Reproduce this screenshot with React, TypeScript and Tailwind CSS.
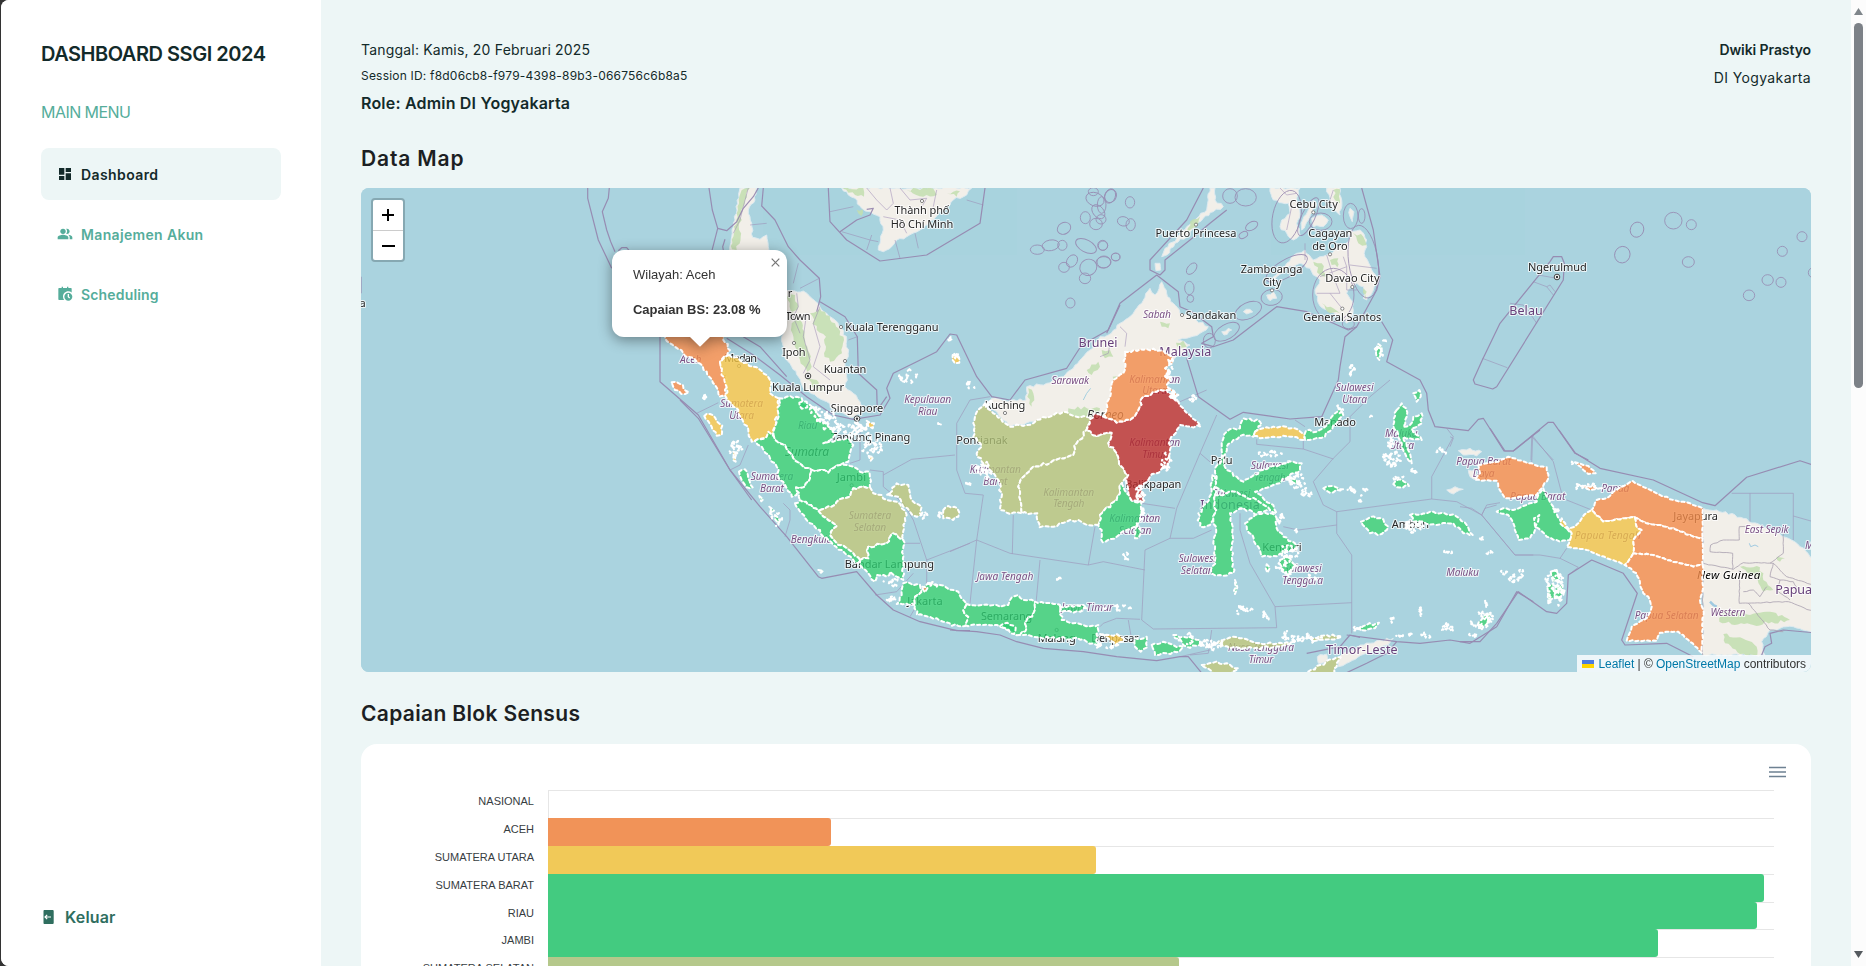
import React from "react";
import { MdDashboard, MdPeopleAlt } from "react-icons/md";
import { RiCalendarScheduleFill } from "react-icons/ri";

/* ------------------------------------------------------------------ */
/* Geometry helpers. Shapes are digitised per sheet at 3 units per px. */
/* ------------------------------------------------------------------ */

type Pt = [number, number];
type Sheet = "A" | "D" | "E" | "F" | "G" | "H" | "I" | "J";

const SHEETS: Record<Sheet, Pt> = {
  A: [360, 180],
  D: [720, 180],
  E: [1100, 180],
  F: [1450, 180],
  G: [620, 400],
  H: [950, 330],
  I: [1180, 380],
  J: [1460, 430],
};

function toPoints(sheet: Sheet, src: string): Pt[] {
  const [ox, oy] = SHEETS[sheet];
  return src
    .trim()
    .split(/\s+/)
    .map((p) => {
      const [x, y] = p.split(",").map(Number);
      return [ox + x / 3, oy + y / 3] as Pt;
    });
}

function noise(x: number, y: number): number {
  const s = Math.sin(x * 12.9898 + y * 78.233) * 43758.5453;
  return (s - Math.floor(s)) * 2 - 1;
}

/* Subdivides every edge and nudges the new points; symmetric per edge so that neighbours share a border. */
function rough(pts: Pt[], amp: number, closed = true): string {
  const out: Pt[] = [];
  const n = pts.length;
  for (let i = 0; i < (closed ? n : n - 1); i++) {
    const a = pts[i];
    const b = pts[(i + 1) % n];
    out.push(a);
    const len = Math.hypot(b[0] - a[0], b[1] - a[1]);
    const steps = Math.floor(len / 3);
    const flip = a[0] < b[0] || (a[0] === b[0] && a[1] < b[1]) ? 1 : -1;
    for (let k = 1; k < steps; k++) {
      const t = k / steps;
      const x = a[0] + (b[0] - a[0]) * t;
      const y = a[1] + (b[1] - a[1]) * t;
      const d = noise(Math.round(x * 4), Math.round(y * 4)) * amp * flip;
      out.push([x - ((b[1] - a[1]) / len) * d, y + ((b[0] - a[0]) / len) * d]);
    }
  }
  if (!closed) out.push(pts[n - 1]);
  return "M" + out.map((p) => `${p[0].toFixed(1)} ${p[1].toFixed(1)}`).join("L") + (closed ? "Z" : "");
}

function line(sheet: Sheet, src: string): string {
  return "M" + toPoints(sheet, src).map((p) => `${p[0].toFixed(1)} ${p[1].toFixed(1)}`).join("L");
}

const GREEN = "#2ecc71";
const ORANGE = "#f18a49";
const YELLOW = "#efc246";
const RED = "#b72a2a";
const OLIVE = "#b0c178";

const LAND: [Sheet, string][] = [
  ["D", "60,24 110,24 105,60 85,90 95,130 98,172 120,178 140,165 145,200 150,240 100,240 60,240 30,215 35,170 45,120 48,80"],
  ["D", "195,335 250,333 270,350 300,380 320,400 345,420 365,445 380,480 385,530 375,560 380,590 375,620 400,640 420,665 430,690 400,712 370,700 340,690 320,665 290,650 250,625 235,590 215,560 195,535 190,500 185,470 200,440 190,400"],
  ["D", "365,24 755,24 740,45 700,60 690,75 660,95 640,120 600,150 560,170 530,180 515,200 490,215 475,210 480,190 490,150 480,110 450,95 425,85 405,55 385,45"],
  ["E", "-340,665 -325,655 -285,662 -222,660 -220,620 -160,610 -110,590 -80,565 -55,535 -30,510 0,470 25,465 60,430 100,400 125,370 150,325 165,345 185,305 200,340 220,370 240,400 270,410 325,440 300,460 260,475 235,480 270,495 215,545 100,700 -60,720 -200,725 -270,740"],
  ["E", "330,24 345,24 345,60 370,80 340,95 310,115 280,145 260,170 225,190 200,225 185,230 195,205 230,175 260,140 290,115 320,90 325,60"],
  ["E", "165,250 180,250 182,270 168,272"],
  ["E", "510,24 600,24 590,60 600,100 590,130 600,165 580,180 560,160 540,140 545,120 570,100 565,70 520,60"],
  ["E", "640,60 650,70 625,120 605,150 608,120"],
  ["E", "635,115 665,105 685,120 670,140 640,140"],
  ["E", "680,24 720,24 725,60 720,105 695,75"],
  ["E", "750,85 762,95 757,125 750,110"],
  ["E", "615,210 640,240 680,225 720,200 745,185 750,150 780,150 800,180 795,230 815,270 835,300 820,330 800,360 790,355 790,320 770,310 750,325 740,340 760,370 755,410 740,430 710,405 680,390 655,370 645,330 660,300 640,285 630,265 600,250 560,265 530,290 515,310 520,290 560,250 590,220"],
  ["E", "500,345 520,335 530,355 510,362"],
  ["E", "430,395 450,388 458,396 440,402"],
  ["E", "365,455 385,445 395,450 372,465"],
  ["J", "728,235 770,240 850,265 930,300 985,325 1020,350 1060,385 1060,605 1000,590 960,595 930,600 905,635 915,675 728,675"],
  ["I", "835,212 870,205 905,215 890,228 850,225"],
  ["I", "800,330 825,320 850,328 820,342"],
  ["I", "865,270 885,270 892,300 870,290"],
  ["I", "478,830 540,795 600,780 640,775 620,795 560,820 500,850 475,860"],
  ["I", "412,830 440,822 444,845 415,850"],
];

const FOREST: [Sheet, string][] = [
  ["D", "65,30 90,24 75,60 60,110 62,170 50,210 36,208 42,160 50,100"],
  ["D", "270,400 300,385 345,430 372,480 366,520 330,545 312,520 318,470 290,450"],
  ["D", "215,430 240,420 262,500 275,560 262,575 240,540 225,500"],
  ["D", "255,590 290,600 310,630 290,632"],
  ["D", "200,350 225,345 235,380 215,400"],
  ["D", "368,26 430,24 432,50 405,45"],
  ["D", "560,30 640,26 650,45 610,50"],
  ["D", "410,90 428,88 424,108"],
  ["D", "680,40 720,34 710,50"],
  ["E", "180,425 210,430 205,445 185,440"],
  ["E", "228,488 250,482 260,500 238,505"],
  ["E", "-40,570 -5,545 0,560 -25,585"],
  ["E", "5,510 30,510 40,530 15,535"],
  ["E", "38,590 66,600 60,620 40,610"],
  ["E", "-215,625 -200,640 -205,680 -218,650"],
  ["E", "-95,685 0,685 0,715 -90,720"],
  ["E", "270,125 300,110 290,140 262,155"],
  ["E", "700,30 720,28 720,70 705,60"],
  ["E", "755,155 790,170 800,195 775,190"],
  ["E", "640,245 665,250 680,290 660,285"],
  ["E", "690,240 715,235 712,262 695,255"],
  ["E", "665,370 700,385 720,400 690,400"],
  ["E", "790,325 800,335 796,360"],
  ["J", "840,410 900,412 910,450 940,480 910,485 880,435"],
  ["J", "795,540 870,555 930,545 990,570 880,585 778,575"],
  ["J", "790,612 840,622 890,650 892,675 840,672 795,640"],
  ["J", "950,380 975,385 960,395"],
];

const PROVINCES: [string, Sheet, string][] = [
  [ORANGE, "A", "900,430 1085,430 1090,480 1110,510 1080,545 1090,580 1100,600 1097,650 1078,650 1065,615 1040,575 1010,545 970,520 945,500 915,475"],
  [ORANGE, "A", "935,607 960,612 987,637 975,642 945,630"],
  [YELLOW, "D", "28,525 60,540 100,560 140,585 155,610 150,640 175,655 180,690 170,710 165,740 155,770 130,775 95,785 85,750 65,715 55,690 40,680 20,655 15,610 5,575 0,548 15,530"],
  [YELLOW, "A", "1033,708 1050,702 1087,737 1085,765 1070,767 1055,740"],
  [YELLOW, "A", "1120,815 1130,820 1127,845 1119,840"],
  [GREEN, "G", "478,-5 500,-10 530,-10 545,-5 550,10 570,15 585,30 600,50 600,65 625,80 645,105 610,130 650,120 680,115 700,135 690,160 685,185 660,195 625,218 600,210 575,210 545,195 520,175 505,155 495,135 465,120 460,95 465,80 475,40"],
  [GREEN, "G", "538,8 560,5 562,22 545,26"],
  [GREEN, "G", "405,122 440,110 445,95 465,120 495,135 505,155 520,175 545,195 575,210 570,235 555,260 528,262 530,285 515,290 500,265 480,240 470,200 450,175 425,140"],
  [GREEN, "G", "575,210 600,210 625,218 660,195 700,200 720,215 748,215 750,262 700,265 690,290 650,305 635,320 595,332 540,300 528,262 555,260 570,235"],
  [OLIVE, "G", "700,265 750,262 760,280 785,285 800,300 830,305 845,325 860,345 850,375 850,420 820,400 800,430 745,440 745,475 720,480 700,460 680,445 655,435 630,405 650,378 610,350 595,332 635,320 650,305 690,290"],
  [GREEN, "G", "525,310 540,300 595,332 610,350 650,378 630,405 655,435 680,445 700,460 720,480 715,490 700,480 680,465 640,435 610,410 600,390 570,370 545,340"],
  [GREEN, "G", "720,480 745,475 745,440 800,430 820,400 850,420 850,540 830,530 810,515 800,530 770,525 765,545 745,520 720,495"],
  [OLIVE, "G", "810,280 830,250 865,255 870,280 885,310 905,320 905,345 890,350 870,335 850,320 835,290 800,285"],
  [OLIVE, "G", "970,330 985,318 1012,325 1015,350 1000,360 970,355"],
  [GREEN, "G", "357,215 375,208 385,235 398,262 380,262 365,240"],
  [GREEN, "G", "418,288 430,298 424,304"],
  [GREEN, "G", "448,320 462,332 450,338"],
  [GREEN, "G", "465,345 480,362 474,368"],
  [GREEN, "G", "595,510 610,512 603,518"],
  [GREEN, "G", "850,550 900,555 905,575 885,590 885,615 830,612 845,585"],
  [GREEN, "G", "925,550 960,555 1000,570 1015,575 1040,612 1030,630 1045,650 1035,678 1015,678 970,665 950,655 890,645 885,615 885,590 905,575"],
  [ORANGE, "G", "907,560 923,563 915,577"],
  [GREEN, "H", "50,822 100,825 150,830 175,825 180,810 205,795 220,810 255,815 250,850 225,880 230,895 210,915 190,910 150,890 100,885 45,885 55,860 40,840"],
  [GREEN, "H", "150,888 172,878 197,893 192,912"],
  [GREEN, "H", "255,815 330,825 335,870 370,880 400,885 445,885 440,940 450,950 410,935 370,925 300,925 250,920 210,915 230,895 225,880 250,850"],
  [GREEN, "H", "330,830 400,825 412,835 370,848 335,845"],
  [YELLOW, "H", "450,912 480,915 500,912 522,925 497,947 475,925"],
  [GREEN, "H", "555,925 590,920 592,952 572,965 555,950"],
  [GREEN, "H", "605,945 640,935 670,945 700,950 690,962 650,970 615,975"],
  [GREEN, "H", "670,915 700,920 750,930 757,948 710,950 695,935"],
  [OLIVE, "I", "110,790 160,770 200,778 240,790 300,788 340,785 300,800 220,805 150,805"],
  [OLIVE, "I", "390,772 440,765 485,770 450,778 400,784"],
  [OLIVE, "I", "65,855 100,848 140,850 175,865 150,885 100,880"],
  [OLIVE, "I", "385,875 420,855 460,838 482,832 470,860 450,890 390,890"],
  [OLIVE, "H", "105,220 130,250 180,290 230,285 260,270 300,260 340,245 380,260 430,265 410,300 380,340 370,375 330,385 300,400 250,410 210,455 205,470 215,550 180,552 150,540 155,500 145,450 120,420 95,395 80,370 95,350 70,320 75,260 90,235"],
  [OLIVE, "H", "410,300 440,318 485,308 475,340 500,370 515,410 535,435 515,460 500,510 450,555 445,585 400,580 385,570 350,575 310,590 268,592 262,550 215,550 205,470 210,455 250,410 300,400 330,385 370,375 380,340"],
  [GREEN, "H", "515,460 530,490 550,515 575,515 575,550 560,590 530,600 500,620 458,637 455,600 445,585 450,555 500,510"],
  [GREEN, "H", "560,580 572,600 565,625 555,625"],
  [RED, "H", "410,300 430,250 465,262 500,278 540,270 565,240 575,205 620,185 650,180 685,215 700,235 735,270 752,290 720,290 690,285 660,330 660,390 650,410 600,440 575,470 585,515 545,512 535,480 530,460 535,435 515,410 500,370 475,340 485,308 440,318"],
  [ORANGE, "H", "525,65 570,58 640,62 665,80 668,100 645,115 660,140 650,165 685,195 650,180 620,185 575,205 565,240 540,270 500,278 465,262 475,210 490,150 520,130"],
  [GREEN, "I", "225,155 245,135 240,125 190,115 180,145 160,145 140,155 125,190 125,240 105,265 110,290 105,320 140,340 170,335 200,355 230,360 270,390 290,400 280,375 250,355 225,335 250,325 280,315 320,295 360,270 365,250 340,245 300,255 250,270 215,290 190,305 170,290 140,270 132,240 140,200 160,180 180,168 220,170"],
  [YELLOW, "I", "225,155 250,145 300,140 345,145 375,165 370,180 330,170 290,172 240,175 220,168"],
  [GREEN, "I", "375,180 378,152 410,155 430,145 455,110 480,85 490,105 460,135 435,170 400,178"],
  [GREEN, "I", "105,290 95,285 95,330 80,370 55,400 60,440 90,435 100,420 105,400 105,345"],
  [GREEN, "I", "105,345 140,340 170,335 200,355 230,360 270,390 250,395 225,405 210,390 180,385 150,400 158,440 160,480 155,530 160,580 120,585 95,580 105,540 100,490 108,440 100,420 105,400"],
  [GREEN, "I", "195,430 225,405 275,400 290,415 290,445 310,470 345,490 350,505 310,520 270,530 245,530 235,500 200,440"],
  [GREEN, "I", "300,540 320,525 345,555 325,588 308,575"],
  [GREEN, "I", "260,553 270,563 262,578"],
  [GREEN, "I", "165,600 172,622 165,642"],
  [GREEN, "I", "430,325 455,318 490,328 450,338"],
  [GREEN, "I", "335,295 350,300 352,312 338,308"],
  [GREEN, "I", "650,90 665,70 678,85 680,110 670,140 690,135 700,110 725,100 725,130 695,145 710,165 725,180 690,175 670,170 690,220 695,250 685,240 665,200 655,165 640,135"],
  [GREEN, "I", "700,40 718,30 722,50 710,65"],
  [GREEN, "I", "640,312 655,298 687,318 650,322"],
  [GREEN, "I", "543,425 570,412 610,418 625,440 605,462 570,460"],
  [GREEN, "I", "690,405 740,400 790,398 830,410 860,435 878,465 850,460 820,430 770,435 730,425 700,425"],
  [GREEN, "I", "530,745 560,735 597,728 585,745 545,750"],
  [GREEN, "I", "893,735 910,710 932,698 925,725 905,750"],
  [GREEN, "J", "272,425 290,420 298,450 280,455"],
  [GREEN, "J", "262,470 280,460 285,500 265,520"],
  [GREEN, "J", "288,470 308,465 303,500 285,505"],
  [ORANGE, "J", "55,105 85,100 115,95 145,80 185,92 225,105 260,112 265,145 245,175 230,195 190,200 160,205 135,205 115,170 110,152 45,150 60,130"],
  [GREEN, "J", "250,175 260,200 280,230 300,270 320,295 335,310 330,330 300,335 260,320 235,295 225,290 222,265 238,255 225,300 210,325 175,330 160,280 145,255 110,245 130,235 160,240 200,225 230,215 235,195"],
  [ORANGE, "J", "410,210 440,205 460,185 518,153 560,175 590,190 640,210 690,220 728,235 728,325 700,320 650,300 600,285 560,280 525,262 490,265 430,275 395,240"],
  [YELLOW, "J", "305,265 300,280 320,295 345,290 380,248 395,240 430,275 490,265 525,262 530,290 545,300 520,330 520,370 495,405 440,385 380,360 320,350 330,330 335,310"],
  [ORANGE, "J", "525,262 560,280 600,285 650,300 700,320 728,325 728,405 700,410 660,400 620,390 580,375 520,370 520,330 545,300 530,290"],
  [ORANGE, "J", "520,370 580,375 620,390 660,400 700,410 728,405 728,480 720,510 730,540 725,668 690,635 655,605 600,608 590,632 500,632 515,590 560,565 575,530 565,500 550,490 530,430 495,405"],
  [ORANGE, "J", "345,97 370,105 385,108 407,130 385,132 370,120"],
  [ORANGE, "J", "350,162 390,170 430,175 390,180"],
  [GREEN, "E", "835,492 845,500 838,540 830,530"],
  [YELLOW, "D", "698,525 715,528 718,548 705,550"],
  [YELLOW, "D", "440,722 462,730 458,745 445,738"],
  [YELLOW, "D", "446,828 460,832 452,842"],
];

/* Clusters of islets: sheet, centre, radii, count. */
const ISLETS: [Sheet, number, number, number, number, number][] = [
  ["D", 320, 715, 35, 22, 20], ["D", 345, 740, 35, 15, 14], ["D", 420, 750, 45, 25, 36], ["D", 455, 800, 30, 28, 20],
  ["D", 285, 690, 25, 15, 8], ["D", 565, 590, 30, 18, 12], ["D", 755, 615, 15, 16, 5], ["D", 693, 482, 4, 4, 2],
  ["D", 710, 530, 12, 12, 6], ["D", 660, 735, 6, 3, 2], ["D", 45, 805, 20, 18, 8],
  ["A", 1040, 655, 12, 8, 6], ["A", 1128, 800, 20, 22, 8], ["G", 470, 355, 20, 25, 7], ["G", 910, 345, 22, 12, 6],
  ["G", 960, 343, 8, 10, 4], ["G", 815, 545, 25, 14, 8], ["G", 813, 602, 16, 8, 7], ["G", 930, 552, 25, 4, 5],
  ["H", 105, 420, 25, 25, 20], ["H", 62, 465, 12, 8, 4], ["H", 650, 395, 15, 22, 14], ["H", 570, 490, 14, 25, 18],
  ["H", 655, 120, 12, 35, 16], ["H", 672, 205, 14, 8, 9], ["H", 728, 200, 6, 10, 4], ["H", 575, 550, 6, 20, 6],
  ["H", 530, 680, 10, 15, 4], ["H", 322, 748, 6, 4, 3], ["H", 500, 832, 45, 10, 8], ["H", 880, 845, 22, 14, 6],
  ["H", 945, 860, 8, 10, 3], ["H", 765, 942, 15, 14, 8], ["H", 710, 930, 25, 18, 8], ["H", 487, 950, 30, 8, 6],
  ["H", 805, 945, 22, 12, 10], ["H", 445, 945, 8, 8, 4], ["H", 115, 225, 12, 10, 5],
  ["I", 275, 225, 40, 10, 12], ["I", 350, 300, 30, 25, 20], ["I", 380, 340, 18, 12, 9], ["I", 300, 410, 8, 25, 9],
  ["I", 325, 515, 30, 22, 16], ["I", 320, 560, 28, 30, 18], ["I", 345, 448, 5, 4, 2], ["I", 395, 590, 25, 15, 5],
  ["I", 185, 690, 20, 12, 6], ["I", 255, 708, 5, 12, 4], ["I", 530, 330, 40, 5, 12], ["I", 542, 355, 5, 14, 4],
  ["I", 640, 235, 28, 22, 26], ["I", 632, 195, 12, 20, 9], ["I", 700, 265, 8, 18, 5], ["I", 655, 290, 18, 8, 4],
  ["I", 785, 210, 15, 8, 5], ["I", 700, 440, 30, 18, 22], ["I", 905, 480, 8, 6, 3], ["I", 805, 515, 12, 4, 4],
  ["I", 930, 515, 5, 10, 3], ["I", 1000, 600, 15, 12, 8], ["I", 1025, 580, 6, 20, 5], ["I", 965, 580, 14, 8, 3],
  ["I", 905, 720, 35, 25, 22], ["I", 920, 670, 6, 14, 4], ["I", 880, 765, 12, 5, 4], ["I", 800, 742, 20, 12, 9],
  ["I", 720, 695, 8, 14, 5], ["I", 640, 720, 10, 8, 5], ["I", 665, 765, 28, 5, 6], ["I", 738, 765, 14, 4, 4],
  ["I", 370, 775, 55, 10, 24], ["I", 320, 765, 10, 12, 6], ["I", 100, 795, 12, 12, 8], ["I", 535, 745, 10, 8, 4],
  ["J", 285, 475, 28, 55, 46], ["E", 752, 562, 12, 22, 8], ["E", 835, 520, 10, 25, 8], ["E", 855, 482, 8, 2, 2],
  ["E", 720, 690, 12, 10, 4], ["J", 290, 240, 12, 18, 5], ["J", 375, 170, 28, 8, 7], ["J", 340, 100, 6, 5, 2],
  ["E", 280, 655, 6, 8, 3], ["E", 808, 712, 4, 2, 1],
];

const MARITIME: [Sheet, string][] = [
  ["A", "683,24 683,55 715,180 755,265"],
  ["A", "748,24 745,55 727,95 740,150 752,185 765,215"],
  ["A", "775,212 785,203 800,203 810,215"],
  ["A", "1047,24 1057,90 1073,145 1055,215"],
  ["A", "1073,145 1100,152 1130,125 1150,85 1180,50 1195,24"],
  ["A", "1095,178 1088,200 1090,210"],
  ["A", "3,290 3,340"],
  ["A", "900,470 900,605 1015,705 1110,870 1175,960"],
  ["G", "180,0 235,55 330,210 420,320 500,410 595,530 605,535 710,515 770,585 820,630 900,665 1010,692 1050,692"],
  ["H", "0,900 80,905 150,915 200,935 280,955 400,965 500,980 620,992 690,980 715,980 760,1035"],
  ["D", "130,24 125,78 165,120 205,200 240,240 298,295 302,350 290,395"],
  ["D", "300,365 375,410 412,470 415,580 470,630 472,690 500,650"],
  ["D", "20,475 100,525 180,585 260,650 340,705 400,718 480,705 510,655 500,625 520,580 590,545 650,515 690,462 710,465 770,590 815,650 870,660 915,600 1040,565 1085,495 1165,450 1200,375"],
  ["D", "70,470 120,500 200,590"],
  ["D", "325,24 330,125 380,180 480,243 620,225 780,130 795,24"],
  ["D", "360,155 410,120 450,105 460,85 440,88"],
  ["E", "20,460 60,370 170,285 235,335 240,380 275,395 335,440 340,470 305,490 340,500 400,480 530,380 620,395 700,430 745,450 770,440 830,330 840,290 820,150 785,24"],
  ["E", "310,24 260,120 150,240 150,270 180,285 195,270 195,240 270,180 330,130 380,90"],
  ["E", "845,425 878,480 860,545 960,600 980,640 985,690 1005,740 1105,752 1135,718 1150,715 1212,813 1240,813 1345,727 1360,727 1425,820 1465,840"],
  ["E", "260,535 295,650 390,718 430,697 570,717 665,710 715,600 720,560 735,470 770,440"],
  ["J", "90,-5 135,63 160,63 240,0"],
  ["J", "297,0 345,68 420,115 580,150 728,218 765,227 860,142 1020,92 1060,105"],
  ["I", "500,765 650,785 720,790 810,780 870,790 950,740 1010,635 1060,665"],
  ["J", "0,635 60,635 110,580 175,485 260,545 290,550 320,520 325,435 395,390 490,430 532,490 485,630 495,645 620,640 700,680"],
  ["I", "380,820 480,800 510,765 540,772"],
  ["I", "485,885 560,850 620,820 650,785"],
  ["F", "300,245 310,230 335,230 343,250 340,300 140,620 128,627 75,612 70,600 97,540 150,430 300,245"],
  ["J", "905,675 915,650 935,640 930,610 970,600 1060,608"],
];

const THIN: [Sheet, string][] = [
  ["A", "1010,700 1075,668"], ["A", "1110,870 1140,855 1165,795"],
  ["D", "365,155 450,180 475,185"], ["D", "330,95 400,80"], ["D", "455,165 440,210"], ["D", "525,180 540,235"], ["D", "585,160 595,205"], ["D", "740,60 790,75"],
  ["D", "235,250 220,310"], ["D", "240,325 298,295"], ["D", "412,470 385,480"], ["D", "140,130 90,135"],
  ["D", "440,24 470,60 500,90 520,70 510,24"], ["D", "540,24 570,60 620,55 600,90"], ["D", "490,110 540,120 560,160"], ["D", "650,30 640,80"],
  ["D", "85,24 70,80 60,120 40,160"], ["D", "230,340 235,380 220,410 240,460"], ["D", "260,400 250,470 270,540 250,580"], ["D", "300,380 280,430 300,500 280,560 330,600"],
  ["G", "495,410 510,360 510,330 490,310"], ["G", "690,190 720,180 720,80"], ["G", "750,210 790,215 790,260 850,310 880,360 920,480 920,550"], ["G", "790,225 875,178 1005,165"],
  ["G", "850,430 900,430"], ["G", "765,585 830,575 880,520"], ["G", "870,650 885,625"], ["G", "1050,430 920,480"],
  ["H", "120,200 60,210 20,280 20,420 45,490 100,495 80,630 60,820"], ["H", "0,665 80,630 180,670 415,705 460,695 585,720"],
  ["H", "190,555 187,672"], ["H", "270,690 258,820"], ["H", "435,590 415,705"], ["H", "575,520 675,535"],
  ["H", "575,870 585,660 660,625 680,535 750,370 800,255"], ["H", "575,870 610,897 980,893 975,830 900,700 870,600 870,550"],
  ["H", "450,890 460,880 500,865 570,868"], ["H", "535,870 545,930"], ["H", "785,900 775,970 720,975"], ["H", "750,370 785,400"], ["H", "660,625 730,625 785,600"],
  ["H", "690,215 770,180"],
  ["I", "510,110 510,185 460,235 400,305 430,375 470,395 470,460 515,525 515,760"], ["I", "470,435 355,450 310,440"], ["I", "515,668 285,680"],
  ["I", "470,395 755,357 830,365 905,405 1005,525 1060,525"], ["I", "755,357 755,290 820,170 800,145"], ["I", "230,178 230,193 370,207 460,237"], ["I", "370,180 370,207"], ["I", "375,140 345,120"],
  ["I", "510,110 570,50 630,0"], ["I", "0,830 90,810"], ["I", "905,405 920,375 960,368"],
  ["J", "0,230 35,235 65,255 165,375 240,375 300,385 355,412"], ["J", "65,255 75,235 110,225"], ["J", "218,18 215,100"], ["J", "218,18 280,95 305,190"], ["J", "300,385 320,355"], ["J", "320,210 395,240"],
  ["J", "355,412 325,435"],
  ["J", "815,190 1000,190 1000,330"], ["J", "870,190 870,275"], ["J", "1000,258 1060,275"],
  ["F", "245,770 243,840"], ["F", "245,770 310,840"], ["F", "0,770 10,775 0,800"],
  ["F", "97,535 172,563"], ["F", "250,305 290,320 310,345"], ["F", "180,370 220,375 240,400 260,430"], ["F", "265,285 320,295"], ["F", "290,320 300,315 315,335"],
  ["E", "575,80 560,150"], ["E", "615,190 615,240"], ["E", "660,290 740,260 730,230"], ["E", "740,260 740,330 770,330"], ["E", "680,225 700,290 720,340 650,340"], ["E", "750,255 830,265"], ["E", "690,340 730,390"],
  ["E", "540,24 560,45 590,40"], ["E", "75,500 80,460 60,440"], ["E", "0,530 25,520 30,490"],
  ["E", "700,30 690,60"],
];

const BORDERS: [Sheet, string][] = [
  ["J", "728,235 728,675"],
  ["J", "728,400 820,418 850,398 940,400 980,440 1060,465"], ["J", "750,365 818,370 818,418"], ["J", "750,365 752,345 790,330 838,330 838,290 860,290"],
  ["J", "970,310 970,370 930,400"], ["J", "838,420 838,520 985,515 1060,545"], ["J", "865,520 930,600 970,605"], ["J", "850,485 880,480 900,500 920,470"],
  ["J", "940,400 930,440 960,450 950,480 990,510"], ["J", "960,450 1000,455 1020,490 1050,490"],
];

/* Maritime zones drawn as looping contours around reefs and small islands. */
const ZONES: [Sheet, number, number, number, number, number][] = [
  ["F", 561, 149, 20, 23, 20], ["F", 670, 122, 26, 25, 0], ["F", 724, 134, 15, 15, 0], ["F", 517, 224, 23, 25, 20], ["F", 715, 246, 18, 16, 0],
  ["F", 1056, 170, 15, 15, 0], ["F", 997, 214, 15, 15, 0], ["F", 953, 300, 17, 16, 0], ["F", 993, 307, 15, 15, 0], ["F", 897, 346, 17, 16, 0], ["F", 1090, 278, 15, 15, 0],
  ["D", 1032, 145, 21, 17, -30], ["D", 952, 209, 21, 14, 0], ["D", 992, 196, 26, 16, -10], ["D", 1027, 196, 14, 15, 0], ["D", 1098, 198, 34, 18, 28],
  ["D", 1149, 197, 14, 14, 0], ["D", 1056, 243, 20, 15, -55], ["D", 1032, 262, 16, 15, 0], ["D", 1105, 262, 26, 24, -30], ["D", 1150, 247, 22, 17, -5],
  ["D", 1095, 295, 17, 16, 0], ["D", 1187, 231, 13, 12, 0], ["D", 1051, 369, 14, 15, 0], ["D", 1096, 113, 15, 18, 0], ["D", 1125, 58, 28, 20, 20],
  ["D", 1172, 48, 17, 20, 30], ["D", 1135, 95, 24, 16, 50], ["D", 1128, 132, 19, 17, 0], ["D", 1120, 35, 15, 12, 0], ["D", 1143, 118, 15, 14, 0],
  ["E", 30, 48, 16, 22, 20], ["E", 90, 67, 14, 17, 0], ["E", 70, 124, 18, 14, 10], ["E", 92, 134, 14, 18, 0], ["E", 8, 196, 15, 15, 0], ["E", 12, 246, 21, 18, 0],
  ["E", 47, 231, 13, 11, 0], ["E", 5, 75, 13, 25, 0], ["E", 275, 266, 12, 20, 40], ["E", 268, 324, 14, 20, 0], ["E", 271, 356, 10, 11, 0], ["E", 455, 138, 20, 12, -30], ["E", 430, 165, 14, 9, -30],
  ["E", 390, 48, 22, 22, 0], ["E", 437, 52, 32, 26, 0],
  ["E", 515, 352, 32, 24, -10], ["E", 445, 392, 42, 24, -25], ["E", 380, 455, 42, 22, -30], ["E", 328, 482, 18, 22, 0],
  ["E", 560, 110, 42, 80, 12], ["E", 625, 110, 20, 62, 25], ["E", 662, 125, 34, 26, 0], ["E", 752, 108, 22, 38, 0], ["E", 785, 108, 10, 22, 0], ["E", 700, 345, 62, 80, 0],
  ["E", 790, 245, 44, 110, -8], ["E", 745, 432, 18, 14, 0], ["E", 560, 265, 70, 26, -30],
];

type Kind = "city" | "state" | "country" | "island" | "bigisland";

const LABELS: [Kind, Sheet, string, number, number, number][] = [
  ["city", "A", "a", 8, 381, 0],
  ["city", "D", "Thành phố", 606, 103, 165], ["city", "D", "Hồ Chí Minh", 606, 144, 188],
  ["city", "D", "r", 210, 350, 0], ["city", "D", "Town", 234, 420, 76],
  ["city", "D", "Kuala Terengganu", 516, 452, 280], ["city", "D", "Ipoh", 222, 527, 70], ["city", "D", "Kuantan", 375, 579, 128],
  ["city", "D", "Kuala Lumpur", 264, 632, 216], ["city", "D", "Singapore", 411, 697, 157], ["city", "D", "Medan", 62, 546, 98],
  ["city", "D", "Tanjung Pinang", 452, 784, 238], ["city", "D", "Kuching", 855, 686, 122], ["city", "D", "Pontianak", 786, 792, 154],
  ["city", "E", "Cebu City", 641, 84, 145], ["city", "E", "Puerto Princesa", 288, 170, 243], ["city", "E", "Cagayan", 691, 170, 132],
  ["city", "E", "de Oro", 690, 210, 106], ["city", "E", "Zamboanga", 515, 278, 185], ["city", "E", "City", 516, 319, 56],
  ["city", "E", "Davao City", 757, 307, 163], ["city", "E", "General Santos", 727, 422, 234], ["city", "E", "Sandakan", 333, 416, 152],
  ["city", "F", "Ngerulmud", 322, 272, 176], ["country", "F", "Belau", 228, 406, 100],
  ["country", "D", "Brunei", 1134, 500, 117], ["country", "E", "Malaysia", 256, 527, 156],
  ["state", "E", "Sabah", 171, 415, 83], ["state", "D", "Sarawak", 1051, 611, 113], ["state", "D", "Kepulauan", 623, 670, 141], ["state", "D", "Riau", 623, 705, 58],
  ["state", "A", "Aceh", 992, 549, 64], ["state", "D", "Sumatera", 65, 680, 128], ["state", "D", "Utara", 65, 716, 74],
  ["state", "D", "Riau", 263, 746, 58], ["island", "G", "Sumatra", 561, 167, 133],
  ["state", "G", "Sumatera", 456, 239, 128], ["state", "G", "Barat", 456, 275, 72], ["city", "G", "Jambi", 694, 243, 88],
  ["state", "G", "Sumatera", 750, 357, 128], ["state", "G", "Selatan", 750, 392, 97], ["state", "G", "Bengkulu", 575, 429, 125],
  ["city", "G", "Bandar Lampung", 808, 503, 268], ["city", "G", "Jakarta", 915, 614, 106],
  ["state", "H", "Kalimantan", 614, 158, 153], ["state", "H", "Utara", 614, 193, 74], ["island", "H", "Borneo", 466, 266, 110],
  ["state", "H", "Kalimantan", 614, 349, 153], ["state", "H", "Timur", 614, 385, 74], ["state", "H", "Kalimantan", 136, 428, 153], ["state", "H", "Barat", 136, 464, 72],
  ["state", "H", "Kalimantan", 356, 497, 153], ["state", "H", "Tengah", 356, 532, 94], ["city", "H", "Balikpapan", 610, 475, 168],
  ["state", "H", "Kalimantan", 554, 576, 153], ["state", "H", "Selatan", 555, 612, 98],
  ["state", "H", "Jawa Tengah", 165, 751, 170], ["city", "H", "Semarang", 170, 869, 154], ["city", "H", "Malang", 320, 937, 114],
  ["state", "H", "Jawa Timur", 412, 842, 155], ["city", "H", "Denpasar", 495, 935, 142],
  ["state", "H", "Sulawesi", 742, 695, 112], ["state", "H", "Selatan", 742, 731, 98],
  ["city", "I", "Palu", 125, 252, 66], ["state", "E", "Sulawesi", 764, 632, 114], ["state", "E", "Utara", 764, 668, 74], ["city", "E", "Manado", 705, 739, 125],
  ["state", "I", "Sulawesi", 270, 268, 114], ["state", "I", "Tengah", 270, 303, 94], ["state", "I", "Sulawesi", 154, 350, 114], ["country", "I", "Indonesia", 150, 386, 178],
  ["city", "I", "Kendari", 306, 513, 118], ["state", "I", "Sulawesi", 368, 575, 114], ["state", "I", "Tenggara", 368, 611, 122],
  ["state", "I", "Maluku", 664, 171, 98], ["state", "I", "Utara", 665, 207, 74], ["state", "I", "Papua Barat", 911, 254, 165], ["state", "I", "Daya", 911, 290, 66],
  ["city", "I", "Ambon", 691, 444, 112], ["state", "I", "Maluku", 848, 588, 98], ["state", "I", "Nusa Tenggara", 243, 813, 198], ["state", "I", "Timur", 243, 849, 74],
  ["country", "I", "Timor-Leste", 546, 822, 214],
  ["state", "J", "Papua Barat", 233, 211, 166], ["state", "J", "Papua", 466, 186, 84], ["state", "J", "Papua Tengah", 443, 326, 198], ["city", "J", "Jayapura", 707, 269, 134],
  ["state", "J", "East Sepik", 920, 309, 132], ["bigisland", "J", "New Guinea", 806, 446, 190], ["country", "J", "Papua", 1001, 491, 110],
  ["state", "J", "Papua Selatan", 620, 566, 192], ["state", "J", "Western", 804, 558, 105], ["state", "J", "M", 1048, 358, 0],
];

const DOTS: [Sheet, number, number, boolean][] = [
  ["D", 606, 63, false], ["D", 363, 441, false], ["D", 222, 489, false], ["D", 375, 543, false], ["D", 264, 588, true], ["D", 411, 716, true], ["D", 855, 699, false],
  ["E", 640, 97, false], ["E", 288, 134, false], ["E", 690, 223, false], ["E", 516, 331, false], ["E", 757, 321, false], ["E", 727, 386, false], ["E", 246, 405, false],
  ["F", 321, 291, true], ["D", 57, 558, false], ["G", 695, 256, false], ["H", 320, 900, false],
];

function labelClass(kind: Kind): string {
  switch (kind) {
    case "city":
      return "fill-[#262626] text-[11px]";
    case "state":
      return "fill-[#7a5084] text-[10.2px] italic";
    case "country":
      return "fill-[#67407a] text-[12.5px]";
    case "island":
      return "fill-[#333333] text-[12px] italic";
    case "bigisland":
      return "fill-[#000000] text-[11.5px] italic";
  }
}

function isletPath([sheet, cx, cy, rx, ry, n]: [Sheet, number, number, number, number, number]): string {
  const [ox, oy] = SHEETS[sheet];
  let d = "";
  for (let i = 0; i < n; i++) {
    const a = noise(cx + i * 7, cy) * Math.PI;
    const r = Math.sqrt(Math.abs(noise(cy + i * 13, cx)));
    const x = ox + (cx + Math.cos(a) * rx * r) / 3;
    const y = oy + (cy + Math.sin(a) * ry * r) / 3;
    const dx = noise(x, i) * 1.8;
    const dy = noise(i, y) * 1.8;
    d += `M${x.toFixed(1)} ${y.toFixed(1)}l${dx.toFixed(1)} ${dy.toFixed(1)}l${(-dy * 0.7).toFixed(1)} ${(dx * 0.7).toFixed(1)}`;
  }
  return d;
}

function MapDrawing() {
  const shapes = PROVINCES.map(([fill, sheet, src]) => {
    const straight = sheet === "J";
    return { fill, d: rough(toPoints(sheet, src), straight ? 0.7 : 1.5) };
  });
  return (
    <svg viewBox="361 188 1450 484" className="block h-full w-full" aria-hidden="true">
      <rect x="361" y="188" width="1450" height="484" fill="#aad3df" />
      <g fill="#f2efe9" stroke="#ddeaf0" strokeWidth="1">
        {LAND.map(([s, p], i) => (
          <path key={i} d={rough(toPoints(s, p), 1.3)} />
        ))}
      </g>
      <g fill="#c3dfb0" opacity="0.85">
        {FOREST.map(([s, p], i) => (
          <path key={i} d={rough(toPoints(s, p), 1.8)} />
        ))}
      </g>
      <g fill="#f2efe9">
        {shapes.map((s, i) => (
          <path key={i} d={s.d} />
        ))}
      </g>
      <g fill="none" stroke="#9585ae" strokeWidth="1.2" strokeLinejoin="round" opacity="0.9">
        {MARITIME.map(([s, p], i) => (
          <path key={i} d={line(s, p)} />
        ))}
      </g>
      <g fill="none" stroke="#9b8ab3" strokeWidth="0.7" opacity="0.75">
        {THIN.map(([s, p], i) => (
          <path key={i} d={line(s, p)} />
        ))}
      </g>
      <g fill="none" stroke="#9585ae" strokeWidth="0.9" opacity="0.85">
        {ZONES.map(([s, cx, cy, rx, ry, rot], i) => {
          const x = SHEETS[s][0] + cx / 3;
          const y = SHEETS[s][1] + cy / 3;
          return <ellipse key={i} cx={x} cy={y} rx={rx / 3} ry={ry / 3} transform={`rotate(${rot} ${x} ${y})`} />;
        })}
      </g>
      <g fill="none" stroke="#a8a0ae" strokeWidth="0.8">
        {BORDERS.map(([s, p], i) => (
          <path key={i} d={rough(toPoints(s, p), 0.4, false)} />
        ))}
      </g>
      <path d={line("J", "868,340 872,350 885,345 895,350")} stroke="#9fc9e0" fill="none" />
      <path d={line("J", "750,515 760,525 770,530")} stroke="#9fc9e0" strokeWidth="2.5" fill="none" />
      <path d={line("D", "1090,660 1100,640 1112,625")} stroke="#a5cfe0" fill="none" />
      <g>
        {DOTS.map(([s, x, y, capital], i) => {
          const cx = SHEETS[s][0] + x / 3;
          const cy = SHEETS[s][1] + y / 3;
          return capital ? (
            <g key={i}>
              <circle cx={cx} cy={cy} r="2.8" fill="#fff" stroke="#333" strokeWidth="0.9" />
              <circle cx={cx} cy={cy} r="1.2" fill="#333" />
            </g>
          ) : (
            <circle key={i} cx={cx} cy={cy} r="1.6" fill="#fff" stroke="#666" strokeWidth="0.8" />
          );
        })}
      </g>
      <g
        textAnchor="middle"
        className="font-['Noto_Sans',sans-serif]"
        stroke="#ffffff"
        strokeOpacity="0.75"
        strokeWidth="2.2"
        strokeLinejoin="round"
        paintOrder="stroke"
      >
        {LABELS.map(([kind, s, text, x, y, w], i) => (
          <text
            key={i}
            x={SHEETS[s][0] + x / 3}
            y={SHEETS[s][1] + y / 3}
            className={labelClass(kind)}
            textLength={w ? w / 3 : undefined}
          >
            {text}
          </text>
        ))}
      </g>
      <g fillOpacity="0.8" stroke="#ffffff" strokeWidth="2" strokeDasharray="3 3" strokeLinecap="round" strokeLinejoin="round">
        {shapes.map((s, i) => (
          <path key={i} d={s.d} fill={s.fill} />
        ))}
      </g>
      <g fill="none" stroke="#ffffff" strokeWidth="2" strokeLinecap="round" strokeLinejoin="round">
        {ISLETS.map((c, i) => (
          <path key={i} d={isletPath(c)} />
        ))}
      </g>
    </svg>
  );
}

function MapPanel() {
  return (
    <div className="relative h-[484px] w-full overflow-hidden rounded-lg bg-[#aad3df] font-['Liberation_Sans',Arial,sans-serif]">
      <MapDrawing />

      <div className="absolute top-[10px] left-[10px] flex flex-col overflow-hidden rounded-[4px] border-2 border-[#86a8b2] bg-white">
        <button className="flex h-[31px] w-[30px] items-center justify-center border-b border-[#cccccc]">
          <svg width="14" height="14" viewBox="0 0 14 14" stroke="#000" strokeWidth="2">
            <path d="M1 7h12M7 1v12" />
          </svg>
        </button>
        <button className="flex h-[29px] w-[30px] items-center justify-center">
          <svg width="14" height="14" viewBox="0 0 14 14" stroke="#000" strokeWidth="2">
            <path d="M1 7h13" />
          </svg>
        </button>
      </div>

      <div className="absolute top-[62px] left-[251px] h-[97px] w-[175px] drop-shadow-[0_3px_7px_rgba(0,0,0,0.4)]">
        <div className="relative h-[87px] rounded-xl bg-white pt-[16px] pl-[21px] text-[13px] leading-[17px] text-[#333333]">
          <p>Wilayah: Aceh</p>
          <p className="mt-[18px] font-bold tracking-[-0.02px]">Capaian BS: 23.08 %</p>
          <svg className="absolute top-[8px] right-[7px]" width="9" height="9" viewBox="0 0 9 9" stroke="#757575" strokeWidth="1.2">
            <path d="M.7.7l7.6 7.6M8.3.7L.7 8.3" />
          </svg>
        </div>
        <svg className="mx-auto block" width="20" height="10" viewBox="0 0 20 10">
          <path d="M0 0h20L10.6 9.2q-.6.6-1.2 0z" fill="#fff" />
        </svg>
      </div>

      <div className="absolute right-0 bottom-0 flex h-[17px] items-center bg-white/80 px-[5px] text-[12px] tracking-[-0.03px] text-[#333333]">
        <svg className="mr-1" width="12" height="8" viewBox="0 0 12 8">
          <path fill="#4C7BE1" d="M0 0h12v4H0z" />
          <path fill="#FFD500" d="M0 4h12v4H0z" />
        </svg>
        <span className="text-[#0078a8]">Leaflet</span>
        <span className="whitespace-pre"> | © </span>
        <span className="text-[#0078a8]">OpenStreetMap</span>
        <span className="whitespace-pre"> contributors</span>
      </div>
    </div>
  );
}

const ROWS: { name: string; width: number; color: string }[] = [
  { name: "NASIONAL", width: 0, color: "bg-white" },
  { name: "ACEH", width: 283, color: "bg-[#f19358]" },
  { name: "SUMATERA UTARA", width: 548, color: "bg-[#f1c958]" },
  { name: "SUMATERA BARAT", width: 1216, color: "bg-[#43cb80]" },
  { name: "RIAU", width: 1209, color: "bg-[#43cb80]" },
  { name: "JAMBI", width: 1110, color: "bg-[#43cb80]" },
  { name: "SUMATERA SELATAN", width: 631, color: "bg-[#b5c88b]" },
];

function ChartCard() {
  return (
    <section className="mt-[15px] h-[260px] shrink-0 rounded-t-[16px] bg-white font-['Liberation_Sans',Arial,sans-serif]">
      <div className="flex h-[46px] items-start justify-end pt-[22px] pr-[25px]">
        <svg width="17" height="12" viewBox="0 0 17 12" stroke="#6e8192" strokeWidth="1.6">
          <path d="M0 1.5h17M0 6h17M0 10.5h17" />
        </svg>
      </div>
      {ROWS.map((row) => (
        <div key={row.name} className="flex h-[27.9px] pr-[37px]">
          <div className="w-[187px] shrink-0 pt-[4px] pr-[14px] text-right text-[11px] leading-[14px] whitespace-nowrap text-[#373d3f]">
            {row.name}
          </div>
          <div className="grow border-t border-l border-[#e6e6e6]">
            <div className={`-mt-px -ml-px h-[27.9px] rounded-r-[3px] ${row.color}`} style={{ width: row.width }} />
          </div>
        </div>
      ))}
    </section>
  );
}

function Sidebar() {
  return (
    <aside className="flex w-[320px] shrink-0 flex-col bg-white px-[40px] pt-[40px] pb-[34px]">
      <h1 className="text-[20px] leading-[28px] font-semibold tracking-[-0.47px] whitespace-nowrap text-[#132a2a]">DASHBOARD SSGI 2024</h1>
      <p className="mt-[32px] text-[16px] leading-[24px] tracking-[-0.55px] text-[#55ad9b]">MAIN MENU</p>
      <nav className="mt-[24px] flex flex-col gap-2 text-[14px] font-semibold text-[#55ad9b]">
        <a className="flex h-[52px] items-center gap-2 rounded-lg bg-[#edf6f6] px-4 text-[#132a2a]">
          <MdDashboard size={16} />
          <span className="tracking-[0.4px]">Dashboard</span>
        </a>
        <a className="flex h-[52px] items-center gap-2 px-4">
          <MdPeopleAlt size={16} />
          <span className="tracking-[0.34px]">Manajemen Akun</span>
        </a>
        <a className="flex h-[52px] items-center gap-2 px-4">
          <RiCalendarScheduleFill size={16} />
          <span className="tracking-[0.17px]">Scheduling</span>
        </a>
      </nav>
      <a className="mt-auto flex items-center gap-[10px] text-[16px] leading-[30px] font-semibold text-[#2f6e5f]">
        <svg width="14" height="14" viewBox="0 0 14 14">
          <path d="M3.3 0h8.400q1 0 1 1v12q0 1-1 1H3.300q-.8 0-.8-1V1q0-1 .8-1z" fill="#2f6e5f" />
          <path d="M10 7H4M6.200 4.900L4 7l2.200 2.100" fill="none" stroke="#fff" strokeWidth="1.2" />
        </svg>
        <span className="tracking-[0.15px]">Keluar</span>
      </a>
    </aside>
  );
}

export default function App() {
  return (
    <div className="h-[966px] w-[1866px] overflow-hidden bg-[#333333] pl-px">
      <div className="flex h-full overflow-hidden rounded-l-[8px] bg-white font-[Inter,sans-serif]">
        <Sidebar />
        <main className="flex min-w-0 grow flex-col bg-[#edf6f6] pt-[39px] pr-[40px] pl-[40px] text-[#132a2a]">
          <header className="flex shrink-0 justify-between">
            <div className="whitespace-nowrap">
              <p className="text-[14px] leading-[21px] tracking-[0.19px]">Tanggal: Kamis, 20 Februari 2025</p>
              <p className="mt-[6px] text-[12px] leading-[19px] tracking-[0.2px]">Session ID: f8d06cb8-f979-4398-89b3-066756c6b8a5</p>
              <p className="mt-[6px] text-[16px] leading-[24px] font-semibold tracking-[0.19px]">Role: Admin DI Yogyakarta</p>
            </div>
            <div className="text-right text-[14px] leading-[21px]">
              <p className="font-semibold tracking-[-0.08px]">Dwiki Prastyo</p>
              <p className="mt-[7px] tracking-[0.37px]">DI Yogyakarta</p>
            </div>
          </header>
          <h2 className="mt-[28px] mb-[14px] shrink-0 text-[21px] leading-[31px] font-semibold tracking-[0.85px] text-[#1c1f23]">Data Map</h2>
          <div className="shrink-0">
            <MapPanel />
          </div>
          <h2 className="mt-[27px] shrink-0 text-[21px] leading-[30px] font-semibold tracking-[0.34px] text-[#1c1f23]">Capaian Blok Sensus</h2>
          <ChartCard />
        </main>
        <div className="flex w-[15px] shrink-0 flex-col items-center justify-between bg-[#fcfcfc] py-[8px]">
          <div className="flex flex-col items-center gap-[8px]">
            <svg width="9" height="7" viewBox="0 0 9 7">
              <path d="M4.500 0L9 7H0z" fill="#7f868b" />
            </svg>
            <div className="h-[365px] w-[9px] rounded-full bg-[#7c8187]" />
          </div>
          <svg width="9" height="7" viewBox="0 0 9 7">
            <path d="M4.500 7L9 0H0z" fill="#555a5f" />
          </svg>
        </div>
      </div>
    </div>
  );
}
